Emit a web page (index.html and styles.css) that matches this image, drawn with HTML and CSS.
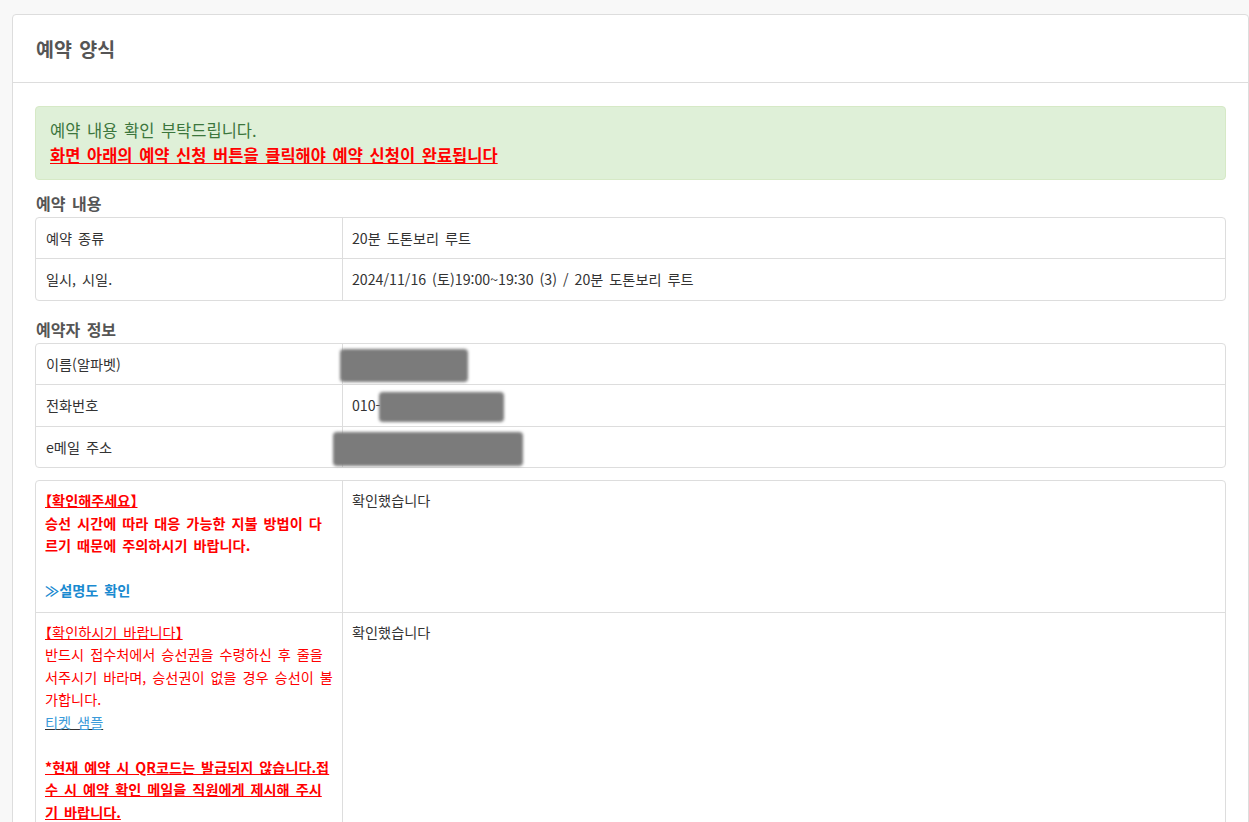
FILE: index.html
```html
<!DOCTYPE html>
<html lang="ko">
<head>
  <meta charset="UTF-8" />
  <title>예약 양식</title>
  <link rel="stylesheet" href="styles.css">
</head>
<body>

  <div class="panel">
    <div class="panel-heading">예약 양식</div>

    <div class="panel-body">
      <!-- notice -->
      <div class="alert">
        <p>예약 내용 확인 부탁드립니다.</p>
        <p class="alert-warn">화면 아래의 예약 신청 버튼을 클릭해야 예약 신청이 완료됩니다</p>
      </div>

      <!-- reservation -->
      <h4 class="section-title">예약 내용</h4>
      <div class="info-table">
        <div class="row">
          <div class="cell label">예약 종류</div>
          <div class="cell">20분 도톤보리 루트</div>
        </div>
        <div class="row">
          <div class="cell label">일시, 시일.</div>
          <div class="cell">2024/11/16 (토)19:00~19:30 (3) / 20분 도톤보리 루트</div>
        </div>
      </div>

      <!-- customer -->
      <h4 class="section-title">예약자 정보</h4>
      <div class="info-table">
        <div class="row">
          <div class="cell label">이름(알파벳)</div>
          <div class="cell"><span class="redact redact-name"></span></div>
        </div>
        <div class="row">
          <div class="cell label">전화번호</div>
          <div class="cell">010-<span class="redact redact-phone"></span></div>
        </div>
        <div class="row">
          <div class="cell label">e메일 주소</div>
          <div class="cell"><span class="redact redact-mail"></span></div>
        </div>
      </div>

      <!-- confirmations -->
      <div class="info-table notes">
        <div class="row">
          <div class="cell label">
            <span class="red bold underline">【확인해주세요】</span><br>
            <span class="red bold">승선 시간에 따라 대응 가능한 지불 방법이 다<br>르기 때문에 주의하시기 바랍니다.</span><br>
            <br>
            <a class="more" href="#">≫설명도 확인</a>
          </div>
          <div class="cell">확인했습니다</div>
        </div>
        <div class="row">
          <div class="cell label">
            <span class="red underline">【확인하시기 바랍니다】</span><br>
            <span class="red">반드시 접수처에서 승선권을 수령하신 후 줄을<br>서주시기 바라며, 승선권이 없을 경우 승선이 불<br>가합니다.</span><br>
            <a class="sample" href="#">티켓 샘플</a><br>
            <br>
            <span class="red bold underline">*현재 예약 시 QR코드는 발급되지 않습니다.접<br>수 시 예약 확인 메일을 직원에게 제시해 주시<br>기 바랍니다.</span>
          </div>
          <div class="cell">확인했습니다</div>
        </div>
      </div>
    </div>
  </div>

</body>
</html>
```

FILE: styles.css
```css
body {
  margin: 0;
  background-color: #f8f8f8;
  font-family: "Noto Sans CJK KR", "Liberation Sans", sans-serif;
  color: #333;
  word-spacing: 2px;
}
.panel {
  margin: 14px 0 0 12px;
  background-color: #fff;
  border: 1px solid #ddd;
  border-radius: 4px;
}
.panel-heading {
  height: 67px;
  display: flex;
  align-items: center;
  padding: 0 23px;
  border-bottom: 1px solid #ddd;
  font-size: 19.5px;
  font-weight: 700;
  color: #555;
}
.panel-body {
  padding: 23px 22px 20px 22px;
}
.alert {
  background-color: #dff0d8;
  border: 1px solid #d6e9c6;
  border-radius: 4px;
  padding: 11px 14px;
  color: #3c763d;
  font-size: 16.5px;
  line-height: 25px;
}
.alert p {
  margin: 0;
}
.alert-warn {
  color: #f00;
  font-weight: 700;
  text-decoration: underline;
}
.section-title {
  margin: 13px 0 3px;
  padding-left: 1px;
  font-size: 16px;
  line-height: 21px;
  font-weight: 700;
  color: #555;
}
.info-table + .section-title {
  margin-top: 18px;
}
.info-table {
  border: 1px solid #ddd;
  border-radius: 4px;
  font-size: 14.2px;
}
.row {
  display: grid;
  grid-template-columns: 306px 1fr;
  border-top: 1px solid #ddd;
}
.row:first-child {
  border-top: none;
}
.cell {
  padding: 10px 9px;
  line-height: 20.4px;
}
.cell + .cell {
  border-left: 1px solid #ddd;
}
.label {
  padding-left: 10px;
}
.redact {
  display: inline-block;
  background-color: #7b7b7b;
  border-radius: 4px;
  filter: blur(1.5px);
  vertical-align: middle;
}
.redact-name {
  width: 128px;
  height: 33px;
  margin: -9px 0 -9px -12px;
}
.redact-phone {
  width: 125px;
  height: 30px;
  margin: -8px 0 -8px -2px;
}
.redact-mail {
  width: 190px;
  height: 34px;
  margin: -10px 0 -10px -19px;
}
.notes {
  margin-top: 12px;
  font-feature-settings: "halt";
}
.notes .cell {
  padding: 8px 9px 10px 9px;
  font-size: 14.2px;
  line-height: 22.5px;
}
.notes .label {
  white-space: nowrap;
}
.red {
  color: #f00;
}
.bold {
  font-weight: 700;
}
.underline {
  text-decoration: underline;
}
.more {
  color: #1a8ad0;
  font-weight: 700;
  text-decoration: none;
}
.sample {
  color: #3a9ad9;
  text-decoration: underline;
  text-decoration-color: #333;
}
```
